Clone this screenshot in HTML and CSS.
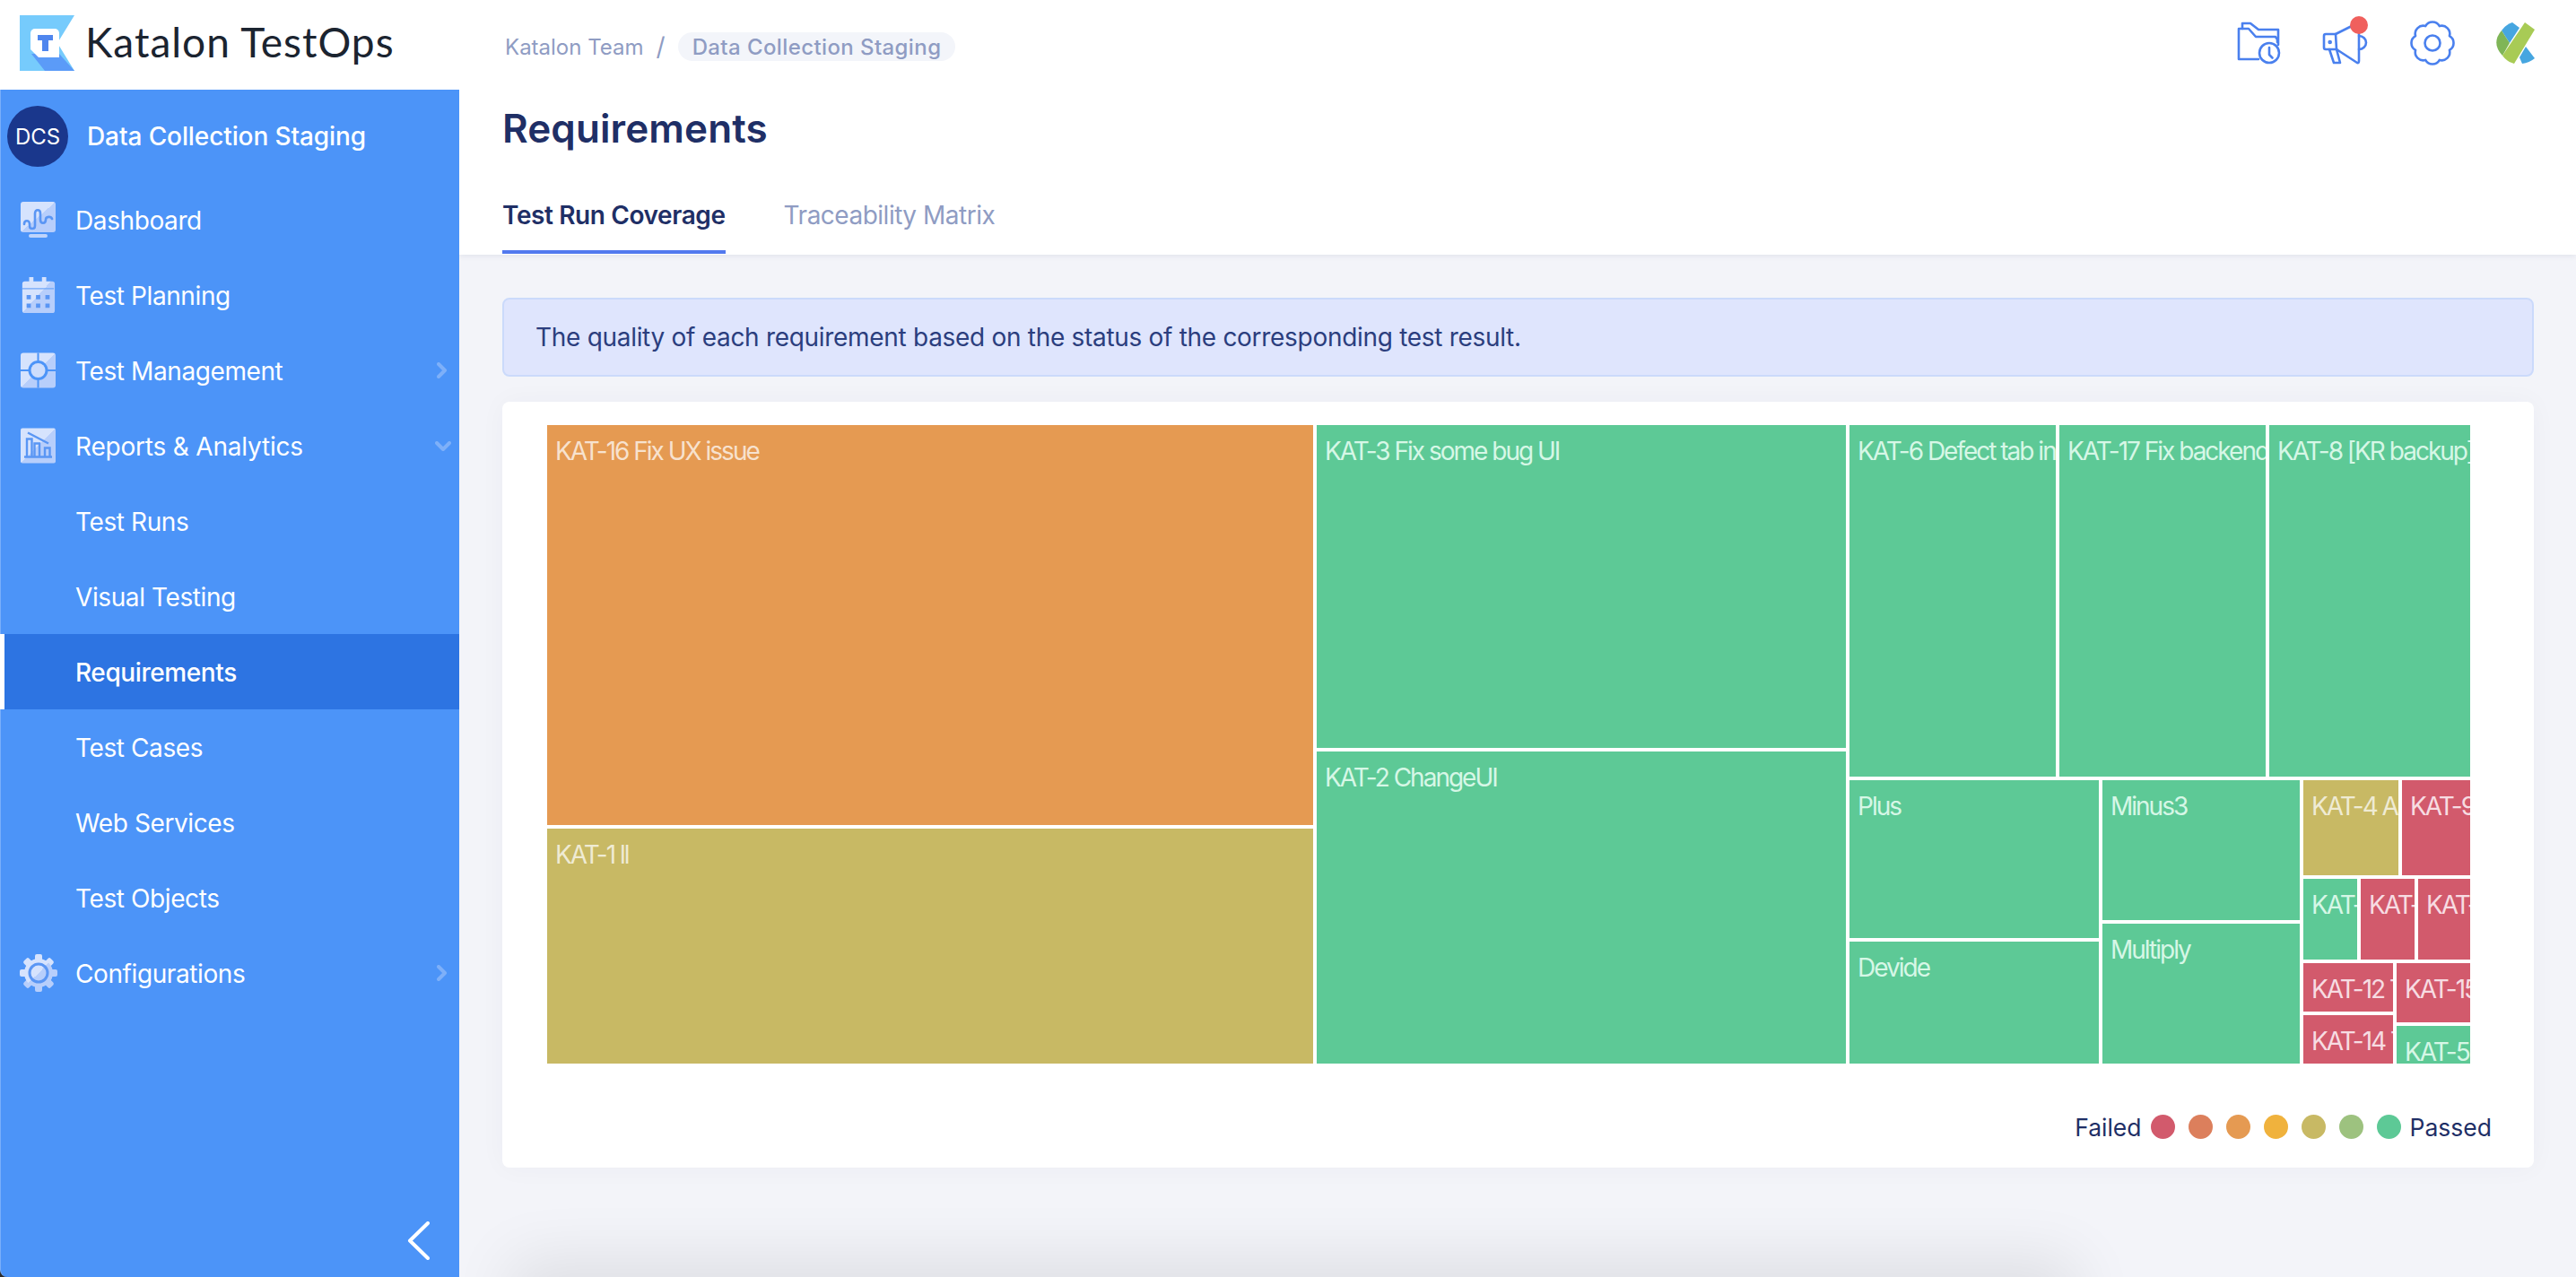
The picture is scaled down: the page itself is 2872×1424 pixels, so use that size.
FILE: index.html
```html
<!DOCTYPE html>
<html lang="en">
<head>
<meta charset="utf-8">
<title>Katalon TestOps - Requirements</title>
<link rel="stylesheet" href="styles.css">
</head>
<body>
<svg class="defs" width="0" height="0" aria-hidden="true">
  <defs>
    <linearGradient id="duo" x1="0" y1="0" x2="1" y2="1">
      <stop offset="0.5" stop-color="#D6E3FD"/>
      <stop offset="0.5" stop-color="#B7CEFB"/>
    </linearGradient>
  </defs>
</svg>
<div class="app">
  <aside class="rail">
    <div class="brand">
      <svg class="brand-mark" viewBox="0 0 61 62">
        <path d="M0 0H61L42 31L61 62H0Z" fill="#76CBFC"/>
        <path d="M13 43H44L61 62H28Z" fill="#5B9BF8"/>
        <path d="M12 20a5 5 0 0 1 5-5H39a5 5 0 0 1 5 5V47H21L12 38Z" fill="#fff"/>
        <path d="M20 22H37V28H32V40H25V28H20Z" fill="#4F86EE"/>
      </svg>
      <span class="brand-name">Katalon TestOps</span>
    </div>
    <nav class="side">
      <div class="team">
        <span class="avatar">DCS</span>
        <span class="team-name">Data Collection Staging</span>
      </div>
      <a class="item">
        <svg class="ico" viewBox="0 0 39 40"><rect width="39" height="34" rx="3" fill="url(#duo)"/><rect x="9" y="36" width="21" height="4" rx="2" fill="#BFD4FB"/><path d="M4 25c0-5 6-5 6 0v2c0 4 6 4 6 0V13c0-5 6-5 6 0v7c0 5 6 5 6 0c0-4 6-4 7-1" fill="none" stroke="#5A96F4" stroke-width="2.6" stroke-linecap="round"/></svg>
        <span class="label">Dashboard</span>
      </a>
      <a class="item">
        <svg class="ico" viewBox="0 0 39 42"><path d="M9 0h5v5h10V0h5v5h7a3 3 0 0 1 3 3v31a3 3 0 0 1-3 3H4a3 3 0 0 1-3-3V8a3 3 0 0 1 3-3h5Z" fill="url(#duo)"/><path d="M1 13.500H38" stroke="#6FA7F8" stroke-width="1.500"/><path d="M6 21h5v5H6zM17 21h5v5h-5zM28 21h5v5h-5zM6 31h5v5H6zM17 31h5v5h-5zM28 31h5v5h-5z" fill="#5A96F4"/></svg>
        <span class="label">Test Planning</span>
      </a>
      <a class="item">
        <svg class="ico" viewBox="0 0 39 39"><rect width="39" height="39" rx="3" fill="url(#duo)"/><path d="M19.500 0V39M0 19.500H39" stroke="#4C94F8" stroke-width="2"/><circle cx="19.500" cy="19.500" r="11" fill="#4C94F8"/><circle cx="19.500" cy="19.500" r="8" fill="#CDDDFC"/></svg>
        <span class="label">Test Management</span>
        <svg class="chev" viewBox="0 0 12 18"><path d="M2 2l7 7-7 7" /></svg>
      </a>
      <a class="item">
        <svg class="ico" viewBox="0 0 39 39"><rect width="39" height="39" rx="2" fill="url(#duo)"/><path d="M7 31V12h5.500V31M15.500 31V17h5.500V31M27 31V22h5.500V31M4 32H35" fill="none" stroke="#5A96F4" stroke-width="2.400"/><path d="M8 5L31 17" stroke="#5A96F4" stroke-width="2.400"/></svg>
        <span class="label wide">Reports &amp; Analytics</span>
        <svg class="chev chev-down" viewBox="0 0 18 12"><path d="M2 2l7 7 7-7" /></svg>
      </a>
      <a class="item"><span class="label sub">Test Runs</span></a>
      <a class="item"><span class="label sub">Visual Testing</span></a>
      <a class="item active"><span class="label sub">Requirements</span></a>
      <a class="item"><span class="label sub">Test Cases</span></a>
      <a class="item"><span class="label sub">Web Services</span></a>
      <a class="item"><span class="label sub">Test Objects</span></a>
      <a class="item">
        <svg class="ico ico-gear" viewBox="0 0 42 42">
          <g fill="#D6E3FD">
            <rect x="17" y="0" width="8" height="10" rx="2"/>
            <rect x="17" y="0" width="8" height="10" rx="2" transform="rotate(-45 21 21)"/>
            <rect x="17" y="0" width="8" height="10" rx="2" transform="rotate(-90 21 21)"/>
            <rect x="17" y="0" width="8" height="10" rx="2" transform="rotate(45 21 21)"/>
          </g>
          <g fill="#B7CEFB">
            <rect x="17" y="0" width="8" height="10" rx="2" transform="rotate(90 21 21)"/>
            <rect x="17" y="0" width="8" height="10" rx="2" transform="rotate(135 21 21)"/>
            <rect x="17" y="0" width="8" height="10" rx="2" transform="rotate(180 21 21)"/>
            <rect x="17" y="0" width="8" height="10" rx="2" transform="rotate(225 21 21)"/>
          </g>
          <circle cx="21" cy="21" r="16" fill="url(#duo)"/>
          <circle cx="21" cy="21" r="10" fill="none" stroke="#5A96F4" stroke-width="3"/>
          <circle cx="21" cy="21" r="6" fill="url(#duo)"/>
        </svg>
        <span class="label">Configurations</span>
        <svg class="chev" viewBox="0 0 12 18"><path d="M2 2l7 7-7 7" /></svg>
      </a>
      <div class="collapse">
        <svg class="collapse-ico" viewBox="0 0 25 43"><path d="M23 2L3 21.500L23 41" /></svg>
      </div>
    </nav>
  </aside>
  <main class="main">
    <header class="head">
      <div class="topline">
        <div class="crumbs">
          <span class="crumb">Katalon Team</span>
          <span class="slash">/</span>
          <span class="crumb pill">Data Collection Staging</span>
        </div>
        <div class="tools">
          <svg class="tool" viewBox="0 0 48 48"><path d="M6 8V2h9l9 7h22v17" /><path d="M24 42H2V8h11l8 9h22l2 3v3" /><circle cx="36" cy="35" r="11" /><path d="M36 29v8l3.500 3.500" /></svg>
          <span class="tool-wrap">
            <svg class="tool" viewBox="0 0 48 48"><path d="M14 14H3a2 2 0 0 0-2 2v13a2 2 0 0 0 2 2h12Z" /><path d="M14 14L32 5M15 31L38 46q2 .5 2-2V11" /><path d="M40 16a8 7.500 0 0 1 0 15" /><path d="M7 31l5 15h7l-4-15" /><circle cx="7.700" cy="23" r="1" /></svg>
            <span class="dot"></span>
          </span>
          <svg class="tool" viewBox="0 0 48 48"><path d="M42.940 31.850A9 9 0 0 1 31.850 42.940A9 9 0 0 1 16.150 42.940A9 9 0 0 1 5.060 31.850A9 9 0 0 1 5.060 16.150A9 9 0 0 1 16.150 5.060A9 9 0 0 1 31.850 5.060A9 9 0 0 1 42.940 16.150A9 9 0 0 1 42.940 31.850Z" /><circle cx="24" cy="24" r="8.500" /></svg>
          <svg class="org" viewBox="0 0 44 47">
            <path d="M18 0L26 6L15 23L6 9Q11 2 18 0Z" fill="#46A6E0"/>
            <path d="M6 9L15 23L7 37Q-6 23 6 9Z" fill="#7FB557"/>
            <path d="M32 0L43 8L20 46Q12 44 7 37Z" fill="#A8CB55"/>
            <path d="M33 27L43 40Q37 45 29 46L26 39Z" fill="#46A6E0"/>
          </svg>
        </div>
      </div>
      <h1 class="title">Requirements</h1>
      <div class="tabs">
        <span class="tab on">Test Run Coverage</span>
        <span class="tab">Traceability Matrix</span>
      </div>
    </header>
    <section class="body">
      <div class="alert">The quality of each requirement based on the status of the corresponding test result.</div>
      <div class="card">
        <div class="tree">
          <div class="col" style="width:854px">
            <div class="tile orange" style="height:446px">KAT-16 Fix UX issue</div>
            <div class="tile khaki grow">KAT-1 ll</div>
          </div>
          <div class="col" style="width:590px">
            <div class="tile green" style="height:360px">KAT-3 Fix some bug UI</div>
            <div class="tile green grow">KAT-2 ChangeUI</div>
          </div>
          <div class="col grow">
            <div class="row" style="height:392px">
              <div class="tile green" style="width:230px">KAT-6 Defect tab in</div>
              <div class="tile green" style="width:230px">KAT-17 Fix backend</div>
              <div class="tile green grow">KAT-8 [KR backup]</div>
            </div>
            <div class="row grow">
              <div class="col" style="width:278px">
                <div class="tile green" style="height:176px">Plus</div>
                <div class="tile green grow">Devide</div>
              </div>
              <div class="col" style="width:220px">
                <div class="tile green" style="height:156px">Minus3</div>
                <div class="tile green grow">Multiply</div>
              </div>
              <div class="col grow">
                <div class="row" style="height:106px">
                  <div class="tile khaki" style="width:106px">KAT-4 Add</div>
                  <div class="tile red grow">KAT-9 Fix</div>
                </div>
                <div class="row" style="height:90px">
                  <div class="tile green" style="width:60px">KAT-7</div>
                  <div class="tile red" style="width:60px">KAT-10</div>
                  <div class="tile red grow">KAT-11</div>
                </div>
                <div class="row grow">
                  <div class="col" style="width:100px">
                    <div class="tile red" style="height:54px">KAT-12 Test</div>
                    <div class="tile red grow">KAT-14 Test</div>
                  </div>
                  <div class="col grow">
                    <div class="tile red" style="height:66px">KAT-15</div>
                    <div class="tile green grow">KAT-5</div>
                  </div>
                </div>
              </div>
            </div>
          </div>
        </div>
        <div class="legend">
          <span class="legend-text">Failed</span>
          <span class="swatch s1"></span>
          <span class="swatch s2"></span>
          <span class="swatch s3"></span>
          <span class="swatch s4"></span>
          <span class="swatch s5"></span>
          <span class="swatch s6"></span>
          <span class="swatch s7"></span>
          <span class="legend-text">Passed</span>
        </div>
      </div>
    </section>
    <div class="stray-shadow"></div>
  </main>
</div>
</body>
</html>
```

FILE: styles.css
```css
* { box-sizing: border-box; }
html, body { margin: 0; padding: 0; height: 100%; }
body {
  font-family: "Inter", "Liberation Sans", sans-serif;
  background: #F3F4F9;
  overflow: hidden;
}
.defs { position: absolute; }
.app { display: flex; height: 1424px; }

/* left rail */
.rail { width: 512px; flex: none; display: flex; flex-direction: column; background: #2B2B2B; }
.brand { height: 100px; flex: none; background: #fff; display: flex; align-items: center; padding-left: 22px; gap: 12px; }
.brand-mark { width: 61px; height: 62px; flex: none; margin-top: -4px; }
.brand-name { font-family: "Lato", sans-serif; font-size: 46px; color: #1B2430; line-height: 1; margin-top: -6px; letter-spacing: 1px; }
.side { flex: 1; background: #4C94F8; display: flex; flex-direction: column; color: #fff; border-bottom-left-radius: 8px; border-left: 1px solid #79AEFA; position: relative; }
.team { height: 103px; flex: none; display: flex; align-items: center; padding: 0 0 0 7px; gap: 21px; }
.avatar { width: 68px; height: 68px; border-radius: 50%; background: #1A378C; display: flex; align-items: center; justify-content: center; font-size: 24px; flex: none; margin-top: 1px; }
.team-name { font-size: 28px; font-weight: 500; letter-spacing: -0.1px; }
.item { height: 84px; flex: none; display: flex; align-items: center; font-size: 28px; padding-left: 22px; gap: 22px; position: relative; }
.label { letter-spacing: -0.4px; margin-top: 2px; }
.label.wide { letter-spacing: -0.2px; }
.item .sub { margin-left: 61px; }
.ico { width: 39px; height: 40px; flex: none; }
.ico-gear { width: 42px; height: 42px; margin-left: -1px; margin-right: -2px; }
.active { background: #2D74E2; font-weight: 500; border-left: 5px solid #fff; margin-left: -1px; padding-left: 18px; }
.active .sub { margin-left: 61px; }
.chev { position: absolute; right: 13px; top: 50%; width: 12px; height: 18px; margin-top: -9px; fill: none; stroke: #7EB0F9; stroke-width: 4; stroke-linecap: round; stroke-linejoin: round; }
.chev-down { right: 9px; width: 18px; height: 12px; margin-top: -5px; }
.collapse { margin-top: auto; height: 62px; display: flex; justify-content: flex-end; padding-right: 33px; }
.collapse-ico { width: 25px; height: 43px; fill: none; stroke: #fff; stroke-width: 4; stroke-linecap: round; stroke-linejoin: round; }

/* main column */
.main { flex: 1; min-width: 0; display: flex; flex-direction: column; position: relative; overflow: hidden; }
.head { height: 284px; flex: none; background: #fff; padding-left: 48px; box-shadow: 0 2px 6px rgba(20, 30, 70, 0.07); position: relative; z-index: 2; }
.topline { height: 96px; display: flex; align-items: center; justify-content: space-between; padding-right: 45px; }
.crumbs { display: flex; align-items: center; margin: 8px 0 0 3px; font-size: 24px; color: #8F9CC3; }
.slash { margin: 0 14px; font-size: 28px; }
.pill { background: #F3F5FA; height: 32px; border-radius: 16px; padding: 0 16px; display: flex; align-items: center; font-weight: 500; letter-spacing: 0.4px; }
.tools { display: flex; align-items: center; gap: 48px; }
.tool { width: 48px; height: 48px; fill: none; stroke: #4A80EE; stroke-width: 2.6; stroke-linecap: round; stroke-linejoin: round; display: block; overflow: visible; }
.tool-wrap { position: relative; display: block; margin-right: 2px; }
.dot { position: absolute; right: -2px; top: -6px; width: 20px; height: 20px; border-radius: 50%; background: #F0605D; }
.org { width: 44px; height: 47px; display: block; margin-left: -1px; }
.title { margin: 19px 0 1px; font-size: 44px; font-weight: 600; line-height: 56px; letter-spacing: 0.1px; color: #1F2F66; }
.tabs { display: flex; gap: 65px; margin-top: 49px; }
.tab { font-size: 28px; line-height: 40px; padding-bottom: 19px; border-bottom: 4px solid transparent; color: #8F9CC3; font-weight: 400; letter-spacing: -0.5px; }
.tab.on { color: #1F2F66; font-weight: 600; border-bottom-color: #5279EE; letter-spacing: -0.4px; }

.body { padding: 48px 47px 0 48px; position: relative; z-index: 1; }
.alert { height: 88px; border: 2px solid #CBDAFB; border-radius: 8px; background: #DFE5FD; color: #2B3E7E; font-size: 28px; letter-spacing: -0.3px; display: flex; align-items: center; padding-left: 35px; }
.card { margin-top: 28px; height: 854px; background: #fff; border-radius: 8px; padding: 26px 0 0 50px; box-shadow: 0 0 30px rgba(30, 40, 90, 0.035); }

/* treemap */
.tree { width: 2144px; height: 712px; display: flex; gap: 4px; }
.col { display: flex; flex-direction: column; gap: 4px; flex: none; min-width: 0; }
.row { display: flex; gap: 4px; flex: none; min-height: 0; }
.grow { flex: 1 1 0; min-width: 0; min-height: 0; }
.tile { flex-shrink: 0; padding: 0 0 0 9px; overflow: hidden; white-space: nowrap; font-size: 28px; font-weight: 400; line-height: 58px; letter-spacing: -2px; color: rgba(255, 255, 255, 0.72); }
.tile.grow { flex: 1 1 0; }
.orange { background: #E59A52; }
.khaki { background: #C8B964; }
.green { background: #5DC996; color: #D6F7E6; }
.red { background: #D25A6C; color: #F7DCE2; }

.legend { width: 2168px; margin-top: 56px; display: flex; align-items: center; justify-content: flex-end; gap: 15px; }
.legend-text { font-size: 26.500px; line-height: 27px; color: #1F2F66; padding-top: 2px; margin: 0 -5px; }
.legend-text:last-child { margin-right: 0; }
.swatch { width: 27px; height: 27px; border-radius: 50%; flex: none; }
.s1 { background: #D25A6C; }
.s2 { background: #DC7F5C; }
.s3 { background: #E59A52; }
.s4 { background: #F0B23D; }
.s5 { background: #C8B964; }
.s6 { background: #9DC27F; }
.s7 { background: #5DC996; }

.stray-shadow { position: absolute; left: 83px; top: 1430px; width: 1695px; height: 40px; box-shadow: 0 0 70px 25px rgba(0, 0, 0, 0.09); }
```
